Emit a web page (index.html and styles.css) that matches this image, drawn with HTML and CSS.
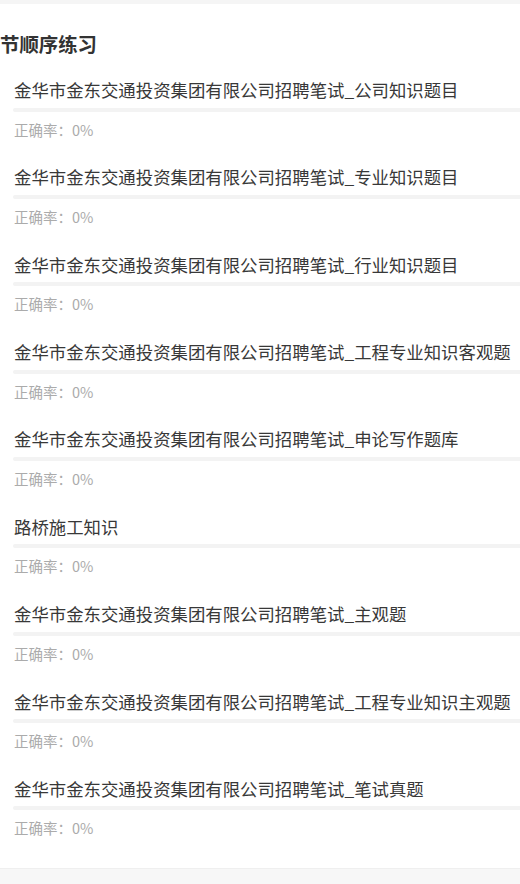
FILE: index.html
```html
<!DOCTYPE html>
<html lang="zh-CN">
<head>
    <meta charset="UTF-8">
    <meta name="viewport" content="width=device-width, initial-scale=1.0">
    <title>章节顺序练习</title>
    <link rel="stylesheet" href="styles.css">
</head>
<body>
    <div class="top-gap"></div>

    <!-- Chapter list -->
    <div class="section">
        <h2 class="section-title">节顺序练习</h2>

        <ul class="chapter-list">
            <li class="chapter">
                <div class="chapter-name">金华市金东交通投资集团有限公司招聘笔试_公司知识题目</div>
                <div class="progress"><div class="progress-fill" style="width: 0%"></div></div>
                <div class="chapter-rate">正确率：0%</div>
            </li>
            <li class="chapter">
                <div class="chapter-name">金华市金东交通投资集团有限公司招聘笔试_专业知识题目</div>
                <div class="progress"><div class="progress-fill" style="width: 0%"></div></div>
                <div class="chapter-rate">正确率：0%</div>
            </li>
            <li class="chapter">
                <div class="chapter-name">金华市金东交通投资集团有限公司招聘笔试_行业知识题目</div>
                <div class="progress"><div class="progress-fill" style="width: 0%"></div></div>
                <div class="chapter-rate">正确率：0%</div>
            </li>
            <li class="chapter">
                <div class="chapter-name">金华市金东交通投资集团有限公司招聘笔试_工程专业知识客观题</div>
                <div class="progress"><div class="progress-fill" style="width: 0%"></div></div>
                <div class="chapter-rate">正确率：0%</div>
            </li>
            <li class="chapter">
                <div class="chapter-name">金华市金东交通投资集团有限公司招聘笔试_申论写作题库</div>
                <div class="progress"><div class="progress-fill" style="width: 0%"></div></div>
                <div class="chapter-rate">正确率：0%</div>
            </li>
            <li class="chapter">
                <div class="chapter-name">路桥施工知识</div>
                <div class="progress"><div class="progress-fill" style="width: 0%"></div></div>
                <div class="chapter-rate">正确率：0%</div>
            </li>
            <li class="chapter">
                <div class="chapter-name">金华市金东交通投资集团有限公司招聘笔试_主观题</div>
                <div class="progress"><div class="progress-fill" style="width: 0%"></div></div>
                <div class="chapter-rate">正确率：0%</div>
            </li>
            <li class="chapter">
                <div class="chapter-name">金华市金东交通投资集团有限公司招聘笔试_工程专业知识主观题</div>
                <div class="progress"><div class="progress-fill" style="width: 0%"></div></div>
                <div class="chapter-rate">正确率：0%</div>
            </li>
            <li class="chapter">
                <div class="chapter-name">金华市金东交通投资集团有限公司招聘笔试_笔试真题</div>
                <div class="progress"><div class="progress-fill" style="width: 0%"></div></div>
                <div class="chapter-rate">正确率：0%</div>
            </li>
        </ul>
    </div>

    <div class="bottom-gap"></div>
</body>
</html>
```

FILE: styles.css
```css
* {
    margin: 0;
    padding: 0;
    box-sizing: border-box;
}

body {
    background: #fff;
    color: #333;
    font-family: "Noto Sans CJK SC", "Noto Sans", sans-serif;
    overflow: hidden;
}

.top-gap {
    height: 4px;
    background: #f5f5f5;
}

/* Section */
.section {
    padding-top: 26px;
    padding-bottom: 4px;
}

.section-title {
    font-size: 19.4px;
    font-weight: 700;
    line-height: 28px;
    color: #333;
    margin-bottom: 20px;
}

.chapter-list {
    list-style: none;
}

.chapter {
    height: 87.36px;
    padding-left: 14px;
}

.chapter-name {
    font-size: 17.4px;
    line-height: 24px;
    color: #383838;
    white-space: nowrap;
}

.progress {
    height: 4px;
    margin-top: 5.5px;
    margin-left: -1px;
    background: #f3f3f3;
    border-radius: 2px 0 0 2px;
}

.progress-fill {
    height: 100%;
    background: #3aa0ff;
    border-radius: 2px;
}

.chapter-rate {
    font-size: 14.5px;
    line-height: 20px;
    margin-top: 8px;
    color: #ababab;
}

.bottom-gap {
    height: 20px;
    background: #f7f7f7;
    border-top: 1px solid #efefef;
}
```
